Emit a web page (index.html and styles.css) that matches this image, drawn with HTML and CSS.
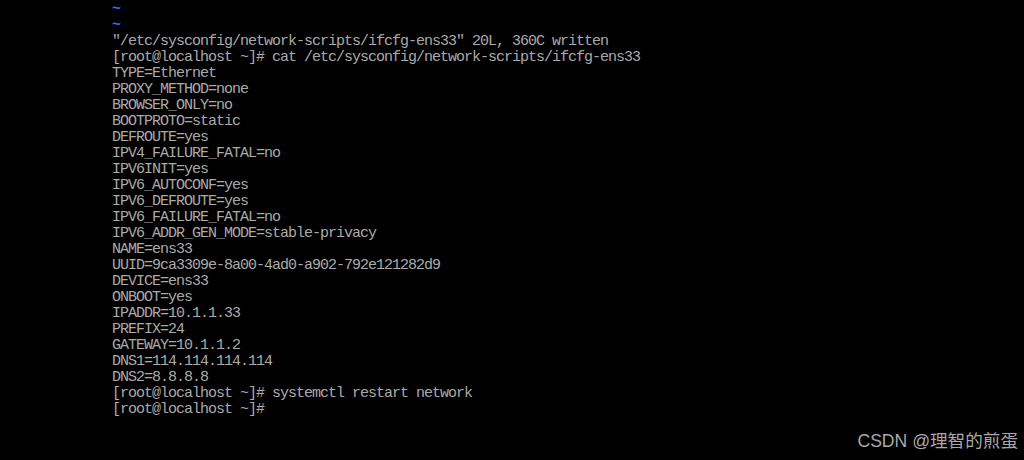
FILE: index.html
```html
<!DOCTYPE html>
<html>
<head>
<meta charset="utf-8">
<link rel="stylesheet" href="styles.css">
</head>
<body>
<div class="term">
<div class="line"><span class="tilde">~</span></div>
<div class="line"><span class="tilde">~</span></div>
<div class="line">"/etc/sysconfig/network-scripts/ifcfg-ens33" 20L, 360C written</div>
<div class="line">[root@localhost ~]# cat /etc/sysconfig/network-scripts/ifcfg-ens33</div>
<div class="line">TYPE=Ethernet</div>
<div class="line">PROXY_METHOD=none</div>
<div class="line">BROWSER_ONLY=no</div>
<div class="line">BOOTPROTO=static</div>
<div class="line">DEFROUTE=yes</div>
<div class="line">IPV4_FAILURE_FATAL=no</div>
<div class="line">IPV6INIT=yes</div>
<div class="line">IPV6_AUTOCONF=yes</div>
<div class="line">IPV6_DEFROUTE=yes</div>
<div class="line">IPV6_FAILURE_FATAL=no</div>
<div class="line">IPV6_ADDR_GEN_MODE=stable-privacy</div>
<div class="line">NAME=ens33</div>
<div class="line">UUID=9ca3309e-8a00-4ad0-a902-792e121282d9</div>
<div class="line">DEVICE=ens33</div>
<div class="line">ONBOOT=yes</div>
<div class="line">IPADDR=10.1.1.33</div>
<div class="line">PREFIX=24</div>
<div class="line">GATEWAY=10.1.1.2</div>
<div class="line">DNS1=114.114.114.114</div>
<div class="line">DNS2=8.8.8.8</div>
<div class="line">[root@localhost ~]# systemctl restart network</div>
<div class="line">[root@localhost ~]#</div>
</div>
<div class="watermark">CSDN @理智的煎蛋</div>
</body>
</html>
```

FILE: styles.css
```css
html, body {
  margin: 0;
  padding: 0;
  background: #000;
  width: 1024px;
  height: 460px;
  overflow: hidden;
}
body {
  position: relative;
}
.term {
  padding-top: 2px;
  padding-left: 112px;
  font-family: "Liberation Mono", "DejaVu Sans Mono", monospace;
  font-size: 15px;
  letter-spacing: -1px;
  line-height: 16px;
  color: #aaaaaa;
}
.line {
  height: 16px;
  white-space: pre;
}
.tilde {
  color: #5c5cff;
  font-weight: bold;
  vertical-align: 7px;
}
.watermark {
  position: absolute;
  right: 6px;
  bottom: 9px;
  font-family: "Liberation Sans", "Noto Sans CJK SC", sans-serif;
  font-size: 17.6px;
  line-height: 20px;
  color: #a8a8a8;
  white-space: nowrap;
}
```
